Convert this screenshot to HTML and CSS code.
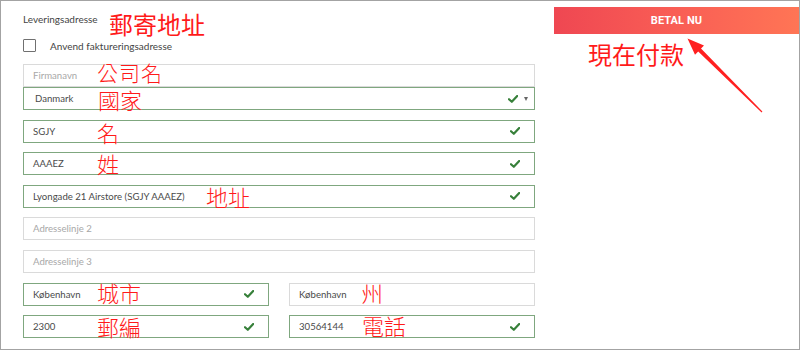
FILE: index.html
```html
<!DOCTYPE html>
<html>
<head>
<meta charset="utf-8">
<link rel="stylesheet" href="styles.css">
</head>
<body>
<div class="frame">
  <div class="form">
    <div class="heading">Leveringsadresse</div>
    <label class="checkrow"><span class="box"></span><span>Anvend faktureringsadresse</span></label>
    <div class="fields">
      <div class="stack">
        <div class="field"><span class="ph">Firmanavn</span></div>
        <div class="field valid select"><span class="val">Danmark</span><span class="icons"><svg class="ok" viewBox="0 0 10 8"><path d="M1 4.2 L3.8 6.8 L9.2 1"/></svg><span class="caret"></span></span></div>
      </div>
      <div class="field valid"><span class="val">SGJY</span><svg class="ok" viewBox="0 0 10 8"><path d="M1 4.2 L3.8 6.8 L9.2 1"/></svg></div>
      <div class="field valid"><span class="val">AAAEZ</span><svg class="ok" viewBox="0 0 10 8"><path d="M1 4.2 L3.8 6.8 L9.2 1"/></svg></div>
      <div class="field valid"><span class="val">Lyongade 21 Airstore (SGJY AAAEZ)</span><svg class="ok" viewBox="0 0 10 8"><path d="M1 4.2 L3.8 6.8 L9.2 1"/></svg></div>
      <div class="field"><span class="ph">Adresselinje 2</span></div>
      <div class="field"><span class="ph">Adresselinje 3</span></div>
      <div class="pair">
        <div class="field valid"><span class="val">København</span><svg class="ok" viewBox="0 0 10 8"><path d="M1 4.2 L3.8 6.8 L9.2 1"/></svg></div>
        <div class="field"><span class="val">København</span></div>
      </div>
      <div class="pair">
        <div class="field valid"><span class="val">2300</span><svg class="ok" viewBox="0 0 10 8"><path d="M1 4.2 L3.8 6.8 L9.2 1"/></svg></div>
        <div class="field valid"><span class="val">30564144</span><svg class="ok" viewBox="0 0 10 8"><path d="M1 4.2 L3.8 6.8 L9.2 1"/></svg></div>
      </div>
    </div>
  </div>
  <div class="side">
    <button class="pay">BETAL NU</button>
  </div>

  <div class="notes">
    <span class="note big n-post">郵寄地址</span>
    <span class="note n-firm">公司名</span>
    <span class="note n-land">國家</span>
    <span class="note n-first">名</span>
    <span class="note n-last">姓</span>
    <span class="note n-addr">地址</span>
    <span class="note n-city">城市</span>
    <span class="note n-zip">郵編</span>
    <span class="note n-state">州</span>
    <span class="note n-phone">電話</span>
    <span class="note big n-pay">現在付款</span>
    <svg class="arrow" viewBox="680 30 90 90" width="90" height="90">
      <polygon points="687.5,38.5 704,45.5 701,48.6 762.4,111.6 761.6,112.4 698.2,51.4 695,54.8"/>
    </svg>
  </div>
</div>
</body>
</html>
```

FILE: styles.css
```css
html, body {
  margin: 0;
  padding: 0;
  background: #ffffff;
}

.frame {
  position: relative;
  width: 800px;
  height: 350px;
  box-sizing: border-box;
  border: 1px solid #a3a3a3;
  background: #ffffff;
  display: flex;
  padding-left: 22px;
  gap: 19px;
  font-family: "Lato", "Liberation Sans", sans-serif;
  color: #4a4a4a;
}

.form {
  width: 512px;
  padding-top: 12px;
  display: flex;
  flex-direction: column;
}

.heading {
  font-size: 10px;
  line-height: 12px;
  height: 12px;
  color: #444;
}

.checkrow {
  margin-top: 14px;
  height: 13px;
  display: flex;
  align-items: center;
  gap: 14px;
  font-size: 10px;
  color: #444;
}

.box {
  width: 11px;
  height: 11px;
  border: 1px solid #707070;
  border-radius: 1px;
  background: #fff;
}

.fields {
  margin-top: 12px;
  display: flex;
  flex-direction: column;
  gap: 9.6px;
}

.stack {
  display: flex;
  flex-direction: column;
}

.pair {
  display: grid;
  grid-template-columns: 246px 246px;
  gap: 20px;
}

.field {
  height: 23px;
  box-sizing: border-box;
  border: 1px solid #dadada;
  background: #fff;
  display: flex;
  align-items: center;
  justify-content: space-between;
  padding: 0 14px 0 9px;
  font-size: 9.6px;
}

.field.valid {
  border-color: #7fa77f;
}

.field.select {
  padding-left: 11px;
  padding-right: 6px;
}

.ph {
  color: #a8a8a8;
}

.val {
  color: #4a4a4a;
}

.ok {
  width: 10px;
  height: 8px;
}

.ok path {
  fill: none;
  stroke: #37803a;
  stroke-width: 2.2;
  stroke-linecap: round;
  stroke-linejoin: round;
}

.icons {
  display: flex;
  align-items: center;
  gap: 6px;
}

.caret {
  width: 0;
  height: 0;
  border-left: 2.5px solid transparent;
  border-right: 2.5px solid transparent;
  border-top: 4px solid #666;
}

.side {
  width: 245px;
  padding-top: 6px;
}

.pay {
  display: block;
  width: 245px;
  height: 27px;
  border: 0;
  margin: 0;
  padding: 0;
  background: linear-gradient(90deg, #ef4752 0%, #f95e55 50%, #ff7555 100%);
  color: #fff;
  font-family: "Roboto", "Liberation Sans", sans-serif;
  font-weight: 700;
  font-size: 11px;
  letter-spacing: 0.1px;
  text-align: center;
}

.notes {
  position: absolute;
  left: -1px;
  top: -1px;
  width: 800px;
  height: 350px;
  pointer-events: none;
}

.note {
  position: absolute;
  font-family: "Noto Sans CJK TC", "Noto Sans CJK SC", sans-serif;
  font-weight: 300;
  font-size: 22px;
  line-height: 18px;
  color: #ff1a1a;
  white-space: nowrap;
}

.note.big {
  font-size: 24px;
  line-height: 24px;
  font-weight: 400;
}

.n-post { left: 109px; top: 12px; }
.n-firm { left: 97px; top: 63px; font-size: 21px; letter-spacing: 1px; }
.n-land { left: 98px; top: 90px; }
.n-first { left: 97px; top: 123px; }
.n-last { left: 97px; top: 154px; }
.n-addr { left: 206px; top: 187px; }
.n-city { left: 97px; top: 283px; }
.n-zip { left: 97px; top: 317px; }
.n-state { left: 361px; top: 283px; }
.n-phone { left: 362px; top: 316px; }
.n-pay { left: 588px; top: 42px; }

.arrow {
  position: absolute;
  left: 680px;
  top: 30px;
}

.arrow polygon {
  fill: #ff2020;
}
```
